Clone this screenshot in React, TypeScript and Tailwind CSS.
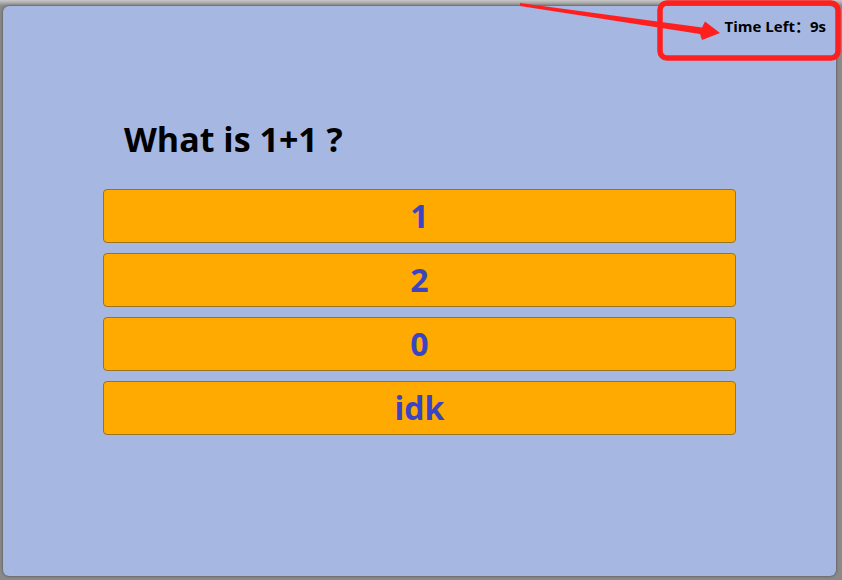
import React from "react";

const options = ["1", "2", "0", "idk"];

export default function App() {
  return (
    <div
      className="relative w-[842px] h-[580px] overflow-hidden bg-[linear-gradient(180deg,#c9c9c9_0px,#8a8a8a_6px,#8a8a8a_100%)] pt-[6px] pl-[3px] pr-[6px] pb-[4px]"
      style={{ fontFamily: '"Open Sans", "Noto Sans CJK SC", sans-serif' }}
    >
      <div className="flex h-full w-full flex-col rounded-[6px] bg-[#a6b7e2] shadow-[0_0_3px_rgba(0,0,0,0.5)]">
        <div className="flex justify-end pr-[10px] pt-[10px]">
          <span className="text-[15px] font-bold leading-[20px] text-black">Time Left：9s</span>
        </div>
        <div className="ml-[121px] mt-[81px] text-[34px] font-bold leading-[44px] text-black">What is 1+1 ?</div>
        <div className="mx-[100px] mt-[28px] flex flex-col gap-[10px]">
          {options.map((o) => (
            <div
              key={o}
              className="flex h-[54px] items-center justify-center rounded-[4px] border border-[#9a7420] bg-[#ffaa00] text-[32px] font-bold text-[#3b45c2]"
            >
              {o}
            </div>
          ))}
        </div>
      </div>
      <svg className="pointer-events-none absolute left-0 top-0" width="842" height="580">
        <rect x="660" y="3" width="178" height="55" rx="7" fill="none" stroke="#ff1f1f" strokeWidth="5.5" />
        <polygon
          points="520,3 702,27.5 705,21.5 720,33 702,40 700,34 520,6"
          fill="#ff1f1f"
        />
      </svg>
    </div>
  );
}
